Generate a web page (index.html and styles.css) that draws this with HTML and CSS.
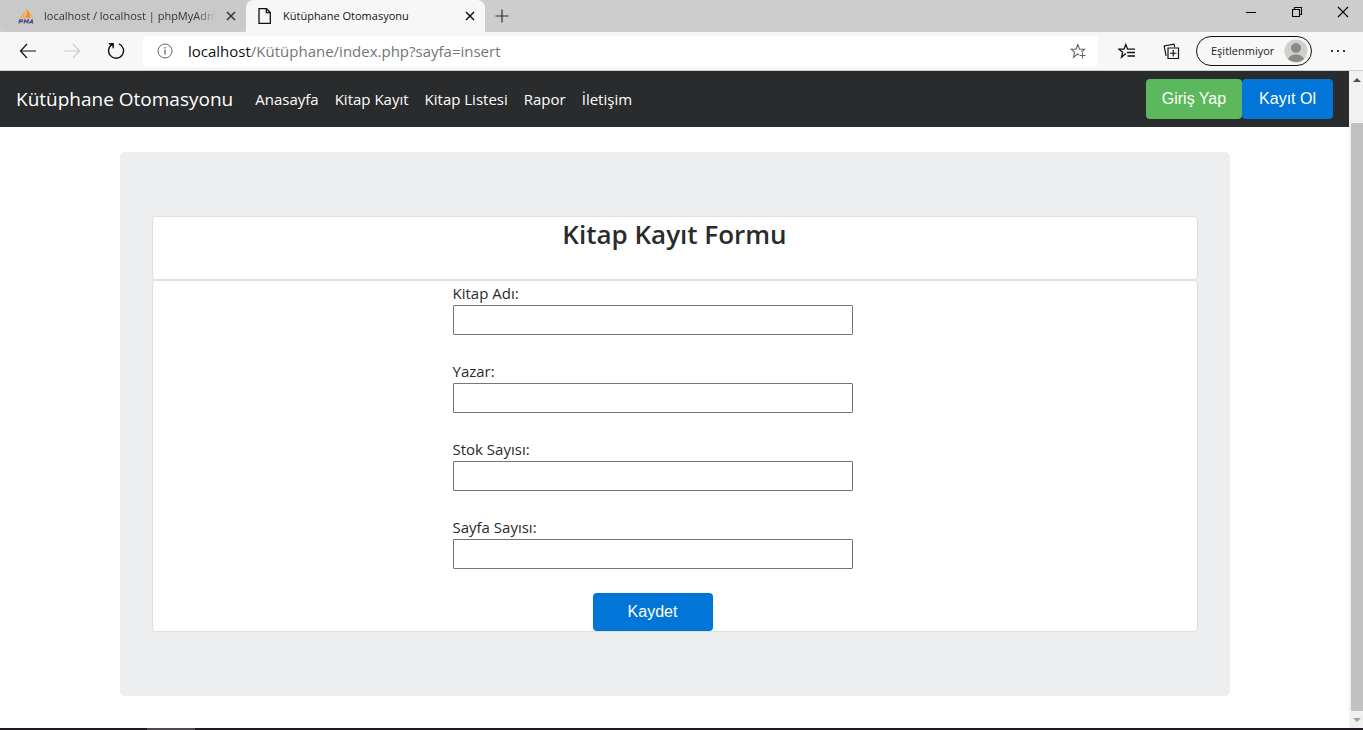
FILE: index.html
```html
<!DOCTYPE html>
<html lang="tr">
<head>
<meta charset="utf-8">
<title>Kütüphane Otomasyonu</title>
<link rel="stylesheet" href="styles.css">
</head>
<body>
<div class="window">
  <header class="tabstrip">
    <div class="tab tab-pma">
      <svg class="favicon" viewBox="0 0 16 16" width="16" height="16" aria-hidden="true">
        <path d="M6.500 2 7 9.500 1.500 10.300Q5 7 6.500 2Z" fill="#f9a94a"/><path d="M8 1Q12.800 4 12.300 9.500L7.500 9.800Q9.500 5 8 1Z" fill="#f78f1e"/><path d="M12.500 4.500Q15.500 7 15 9.500H12.900Z" fill="#fbb565"/>
        <path d="M.8 15.500 1.800 11.800H4Q5.500 12.200 4 13.700H1.500M6 15.500 7 11.800 8.300 14 10.300 11.800 9.800 15.500M11.200 15.500 14 11.800 14.800 15.500M12.500 14.400H14.500" fill="none" stroke="#4b4b80" stroke-width="1.200"/>
      </svg>
      <span class="tab-title tab-fade">localhost / localhost | phpMyAdmin</span>
      <button class="icon-button tab-close" aria-label="Sekmeyi kapat"><svg width="10" height="10" viewBox="0 0 10 10"><path d="M1 1 9 9M9 1 1 9" stroke="#333" stroke-width="1.5"/></svg></button>
    </div>
    <div class="tab tab-active">
      <svg class="favicon" width="16" height="16" viewBox="0 0 16 16" aria-hidden="true"><path d="M2 .7H9.5L13.3 4.5V15.3H2ZM9.3.7V4.7H13.3" fill="none" stroke="#111" stroke-width="1.3"/></svg>
      <span class="tab-title">Kütüphane Otomasyonu</span>
      <button class="icon-button tab-close" aria-label="Sekmeyi kapat"><svg width="10" height="10" viewBox="0 0 10 10"><path d="M1 1 9 9M9 1 1 9" stroke="#111" stroke-width="1.5"/></svg></button>
    </div>
    <button class="icon-button new-tab" aria-label="Yeni sekme"><svg width="14" height="14" viewBox="0 0 14 14"><path d="M7 .5V13.5M.5 7H13.5" stroke="#333" stroke-width="1.2"/></svg></button>
    <div class="window-controls">
      <button class="icon-button" aria-label="Küçült"><svg width="12" height="12" viewBox="0 0 12 12"><path d="M1 6.5H11" stroke="#000"/></svg></button>
      <button class="icon-button" aria-label="Önceki boyut"><svg width="12" height="12" viewBox="0 0 12 12"><path d="M1.5 3.5H8.5V10.5H1.5ZM3.5 3.5V1.5H10.5V8.5H8.5" fill="none" stroke="#000" stroke-width="1.1"/></svg></button>
      <button class="icon-button" aria-label="Kapat"><svg width="12" height="12" viewBox="0 0 12 12"><path d="M1 1 11 11M11 1 1 11" stroke="#000" stroke-width="1.1"/></svg></button>
    </div>
  </header>

  <div class="toolbar">
    <div class="history">
      <button class="icon-button" aria-label="Geri"><svg width="18" height="16" viewBox="0 0 18 16"><path d="M8 1 1.5 8 8 15M1.5 8H17" fill="none" stroke="#111" stroke-width="1.2"/></svg></button>
      <button class="icon-button" aria-label="İleri"><svg width="18" height="16" viewBox="0 0 18 16"><path d="M10 1 16.500 8 10 15M16.500 8H1" fill="none" stroke="#ccc" stroke-width="1.2"/></svg></button>
      <button class="icon-button" aria-label="Yenile"><svg width="18" height="18" viewBox="0 0 18 18"><path d="M12 1.800A7.500 7.500 0 1 1 5.500 2.100M1.800 1.700H6.200V6.200" fill="none" stroke="#111" stroke-width="1.400"/></svg></button>
    </div>
    <div class="address">
      <svg width="16" height="16" viewBox="0 0 16 16" aria-hidden="true"><circle cx="8" cy="8" r="7" fill="none" stroke="#666"/><path d="M8 6.800V11.500M8 4V5.400" stroke="#555" stroke-width="1.200"/></svg>
      <a class="url" href="#"><span class="host">localhost</span>/Kütüphane/index.php?sayfa=insert</a>
      <button class="icon-button" aria-label="Sık kullanılanlara ekle"><svg width="17" height="17" viewBox="0 0 17 17"><path d="M9 11.800 7.500 11 3.500 14.300 4.600 9.300 1 6.200H6L7.800 1.500 9.600 6.200H14.600L11.500 9M12.500 9.500V15.500M9.500 12.500H15.500" fill="none" stroke="#666" stroke-width="1.100"/></svg></button>
    </div>
    <div class="tools">
      <button class="icon-button" aria-label="Sık kullanılanlar"><svg width="18" height="17" viewBox="0 0 18 17"><path d="M8 11.400 7.200 11 3.500 14.300 4.600 9.300 1 6.200H6L7.800 1.500 9.600 6.200H17M9 9.500H17M9.500 13H17" fill="none" stroke="#111" stroke-width="1.300"/></svg></button>
      <button class="icon-button" aria-label="Koleksiyonlar"><svg width="17" height="17" viewBox="0 0 17 17"><path d="M5 5H15.500V15.500H5ZM10.250 7V13.500M7 10.250H13.500M3.500 12.500H3L1.200 3 11 1.200 11.700 4" fill="none" stroke="#111" stroke-width="1.200"/></svg></button>
      <button class="profile">Eşitlenmiyor
        <svg width="24" height="24" viewBox="0 0 24 24" aria-hidden="true"><circle cx="12" cy="12" r="11.500" fill="#d2d0ce"/><circle cx="12" cy="9" r="5" fill="#8d8984"/><path d="M4 20Q6 15.500 12 15.500T20 20Q17 23 12 23T4 20Z" fill="#8d8984"/></svg>
      </button>
      <button class="icon-button" aria-label="Ayarlar"><svg width="16" height="4" viewBox="0 0 16 4"><path d="M1 1H3V3H1ZM7 1H9V3H7ZM13 1H15V3H13Z" fill="#333"/></svg></button>
    </div>
  </div>

  <div class="viewport">
    <div class="page">
      <nav class="navbar">
        <a class="brand" href="#">Kütüphane Otomasyonu</a>
        <div class="nav-links">
          <a href="#">Anasayfa</a><a href="#">Kitap Kayıt</a><a href="#">Kitap Listesi</a><a href="#">Rapor</a><a href="#">İletişim</a>
        </div>
        <div class="nav-actions">
          <button class="btn btn-success">Giriş Yap</button><button class="btn btn-primary">Kayıt Ol</button>
        </div>
      </nav>
      <main class="jumbotron">
        <div class="card card-title"><h1>Kitap Kayıt Formu</h1></div>
        <form class="card card-form">
          <div class="fields">
            <div class="field"><label for="kitap">Kitap Adı:</label><input id="kitap" type="text"></div>
            <div class="field"><label for="yazar">Yazar:</label><input id="yazar" type="text"></div>
            <div class="field"><label for="stok">Stok Sayısı:</label><input id="stok" type="text"></div>
            <div class="field"><label for="sayfa">Sayfa Sayısı:</label><input id="sayfa" type="text"></div>
            <button class="btn btn-primary btn-save" type="button">Kaydet</button>
          </div>
        </form>
      </main>
    </div>
    <div class="scrollbar" aria-hidden="true">
      <svg width="8" height="4" viewBox="0 0 8 4"><path d="M0 4 4 0 8 4Z" fill="#505050"/></svg>
      <div class="thumb"></div>
      <svg width="8" height="4" viewBox="0 0 8 4"><path d="M0 0 4 4 8 0Z" fill="#a0a0a0"/></svg>
    </div>
  </div>
  <div class="taskbar"><div class="taskbar-item"></div></div>
</div>
</body>
</html>
```
FILE: styles.css
```css
* { box-sizing: border-box; }
body {
  margin: 0;
  font-family: "Open Sans", "Noto Sans", sans-serif;
  font-size: 15px;
  line-height: 24px;
  color: #292b2c;
  background: #fff;
}
a { text-decoration: none; }
svg { display: block; flex: none; }
button { font: inherit; }
.window { display: flex; flex-direction: column; min-height: 100vh; }

.icon-button {
  display: flex;
  align-items: center;
  justify-content: center;
  padding: 0;
  border: 0;
  background: none;
}

.tabstrip { display: flex; height: 32px; background: #cdcdcd; }
.tab {
  display: flex;
  align-items: center;
  gap: 10px;
  padding: 0 10px 0 18px;
  font-size: 11px;
  color: #333;
}
.tab-pma { width: 246px; border-radius: 0 0 8px 8px; background: #c9c9c9; }
.tab-active {
  width: 239px;
  padding-left: 11px;
  border-radius: 8px 8px 0 0;
  background: #f7f7f7;
  color: #111;
}
.tab-title { flex: 1; overflow: hidden; white-space: nowrap; }
.tab-fade {
  -webkit-mask-image: linear-gradient(to right, #000 88%, transparent);
  mask-image: linear-gradient(to right, #000 88%, transparent);
}
.new-tab { width: 34px; }
.window-controls { display: flex; align-items: flex-start; gap: 34px; margin-left: auto; padding: 6px 14px 0 0; }

.toolbar {
  display: flex;
  align-items: center;
  height: 39px;
  border-bottom: 1px solid #c9cfcf;
  background: #f7f7f7;
}
.history { display: flex; align-items: center; gap: 26px; padding: 0 18px 0 19px; }
.address {
  flex: 1;
  display: flex;
  align-items: center;
  gap: 15px;
  height: 31px;
  padding: 0 11px 0 14px;
  border-radius: 4px;
  background: #fff;
}
.url { flex: 1; color: #757575; }
.host { color: #111; }
.tools { display: flex; align-items: center; gap: 27px; padding: 0 17px 0 20px; }
.profile {
  display: flex;
  align-items: center;
  justify-content: space-between;
  width: 116px;
  height: 30px;
  margin: 0 -9px 0 -11px;
  padding: 0 3px 0 14px;
  border: 1px solid #111;
  border-radius: 15px;
  background: #f7f7f7;
  color: #222;
  font-size: 11px;
}

.viewport { flex: 1; display: flex; }
.page { flex: 1; min-width: 0; padding-bottom: 32px; }
.navbar {
  display: flex;
  align-items: center;
  height: 56px;
  padding: 0 16px;
  background: #292b2c;
}
.navbar a { color: #fff; white-space: nowrap; }
.brand { font-size: 19px; }
.nav-links { display: flex; gap: 16px; padding-left: 22px; }
.nav-actions { display: flex; margin-left: auto; }
.btn {
  height: 40px;
  padding: 0 17px;
  border: 0;
  border-radius: 4px;
  color: #fff;
  font-family: "Liberation Sans", Arial, sans-serif;
  font-size: 16px;
}
.btn-success { padding: 0 16px; background: #5cb85c; }
.btn-primary { background: #0275d8; }

.jumbotron {
  max-width: 1110px;
  margin: 25px auto 0;
  padding: 64px 32px;
  border-radius: 5px;
  background: #eceeef;
}
.card { border: 1px solid #dfdfdf; border-radius: 4px; background: #fff; }
.card-title { height: 64px; }
h1 { margin: 0; font-size: 26px; font-weight: 600; line-height: 34px; text-align: center; }
.card-form { padding-left: 300px; }
.fields { display: flex; flex-direction: column; gap: 24px; width: 400px; }
.field { display: flex; flex-direction: column; }
.field input {
  height: 30px;
  padding: 1px 2px;
  border: 1px solid #767676;
  border-radius: 1px;
  background: #fff;
  font: inherit;
}
.btn-save { align-self: center; width: 120px; height: 38px; }

.scrollbar {
  display: flex;
  flex-direction: column;
  align-items: center;
  width: 14px;
  padding: 7px 0 6px 2px;
  background: #f1f1f1;
}
.thumb { flex: 1; align-self: stretch; margin: 41px 0 7px; background: #c1c1c1; }

.taskbar { height: 2px; padding-left: 147px; background: #211a22; }
.taskbar-item { width: 48px; height: 2px; background: #504850; }
```
